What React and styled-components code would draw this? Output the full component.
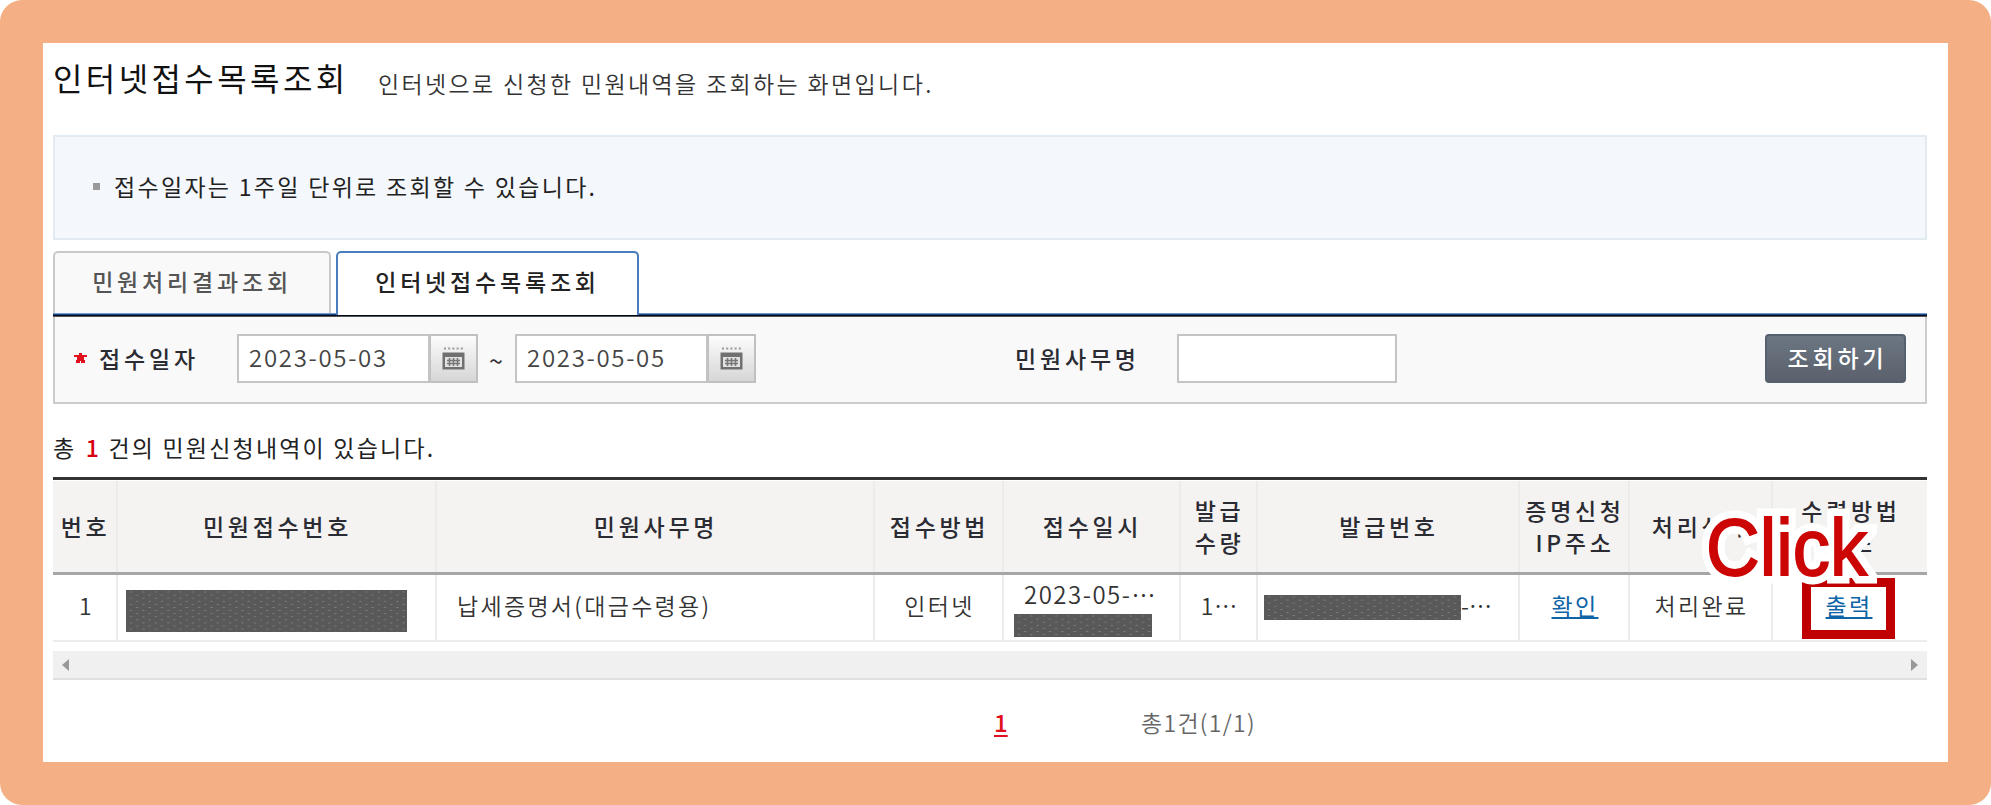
import React from "react"
import styled, { createGlobalStyle, css } from "styled-components"

const GlobalStyle = createGlobalStyle`
  * {
    box-sizing: border-box;
  }

  body {
    margin: 0;
    background: #fff;
    font-family: "Noto Sans CJK KR", sans-serif;
    font-size: 23px;
    color: #333;
  }
`

const Frame = styled.div`
  width: 1991px;
  height: 805px;
  padding: 43px;
  border-radius: 22px;
  background: #f4b084;
`

const Page = styled.main`
  height: 719px;
  padding: 0 21px 0 10px;
  background: #fff;
  white-space: nowrap;
`

const Header = styled.header`
  display: flex;
  height: 92px;
`

const Title = styled.h1`
  margin: 0;
  width: 325px;
  padding-top: 11px;
  font-size: 32px;
  font-weight: 400;
  line-height: 46px;
  letter-spacing: 3.4px;
  color: #111;
`

const Subtitle = styled.p`
  margin: 0;
  padding-top: 23px;
  line-height: 34px;
  letter-spacing: 2.35px;
  font-weight: 350;
  color: #333;
`

const Notice = styled.div`
  display: flex;
  align-items: center;
  gap: 14px;
  height: 105px;
  padding: 0 39px 3px 38px;
  border: 2px solid #e2eaf2;
  background: #f4f7fc;
  letter-spacing: 2.3px;
  color: #222;

  &::before {
    content: "";
    width: 7px;
    height: 7px;
    background: #999;
  }
`

const Tabs = styled.nav`
  display: flex;
  gap: 5px;
  height: 66px;
  margin-top: 11px;
  background: linear-gradient(#6f98cc 0 1px, #1f4580 1px 2px, #000a1f 2px 3px, #555 3px)
    bottom / 100% 4px no-repeat;
`

const Tab = styled.button`
  width: ${(p) => p.$width}px;
  height: 62px;
  padding: 0 0 5px;
  border: 2px solid #c9c9c9;
  border-bottom: 0;
  border-radius: 5px 5px 0 0;
  background: #f9f9f9;
  font: 500 23px/32px "Noto Sans CJK KR", sans-serif;
  letter-spacing: 3.8px;
  color: #555;

  ${(p) =>
    p.$active &&
    css`
      height: 64px;
      padding-bottom: 7px;
      border-color: #4a7dbd;
      background: #fff;
      color: #222;
    `}
`

const SearchPanel = styled.form`
  display: flex;
  height: 87px;
  padding: 17px 19px 0 19px;
  border: 2px solid #ccc;
  border-top: 0;
  background: #f9f9f9;
`

const Required = styled.svg`
  margin-top: 19px;
  width: 13px;
  height: 10px;
`

const Label = styled.label`
  width: ${(p) => p.$width}px;
  padding-left: ${(p) => p.$indent}px;
  font-weight: 500;
  line-height: 48px;
  letter-spacing: 3.8px;
  color: #2b2b33;
`

const Field = styled.input`
  width: ${(p) => p.$width}px;
  height: 49px;
  padding: 0 10px 4px;
  border: 2px solid #c4c4c4;
  background: #fff;
  font: 350 24px "Noto Sans CJK KR", sans-serif;
  letter-spacing: 1.7px;
  color: #444;
  outline: 0;
`

const CalendarButton = styled.button`
  display: grid;
  place-items: center;
  width: 48px;
  height: 49px;
  padding: 0;
  border: 2px solid #c0c0c0;
  border-left-width: 1px;
  background: linear-gradient(#fcfcfc, #d6d6d6);
`

const Tilde = styled.span`
  width: 37px;
  padding-right: 1px;
  text-align: center;
  font-size: 25px;
  line-height: 52px;
`

const SearchButton = styled.button`
  width: 141px;
  height: 49px;
  margin-left: auto;
  padding: 0 0 4px 4px;
  border: 2px solid #566170;
  border-radius: 4px;
  background: linear-gradient(#6b7682, #5b616c);
  font: 500 23px "Noto Sans CJK KR", sans-serif;
  letter-spacing: 3.9px;
  color: #fff;
`

const Count = styled.p`
  height: 73px;
  margin: 0;
  padding-top: 25px;
  line-height: 36px;
  letter-spacing: 2.2px;
  color: #222;

  strong {
    margin: 0 0 0 2px;
    font-weight: 500;
    color: #d9000d;
  }
`

const columns = css`
  display: grid;
  grid-template-columns: 65px 319px 438px 129px 177px 77px 262px 110px 143px 154px;
`

const Table = styled.section`
  border-top: 3px solid #333;
`

const HeadRow = styled.div`
  ${columns}
  height: 94px;
  margin-top: 1px;
  border-bottom: 3px solid #a6a6a6;
  background: #f4f3f1;
`

const HeadCell = styled.div`
  display: flex;
  align-items: center;
  justify-content: center;
  padding: 0 0 1px 2px;
  border-right: 2px solid #ebebea;
  font-weight: 500;
  line-height: 32px;
  letter-spacing: 3.7px;
  text-align: center;
  white-space: pre-line;
  color: #2b2b33;

  &:last-child {
    border-right: 0;
  }
`

const Row = styled.div`
  ${columns}
  height: 67px;
  border-bottom: 2px solid #ececec;
`

const Cell = styled.div`
  display: flex;
  flex-direction: ${(p) => (p.$stacked ? "column" : "row")};
  align-items: ${(p) => (p.$stacked ? "flex-start" : "center")};
  justify-content: ${(p) => (p.$left ? "flex-start" : "center")};
  padding-left: ${(p) => p.$indent ?? 2}px;
  border-right: 2px solid #ebebeb;
  line-height: 32px;
  letter-spacing: ${(p) => p.$spacing ?? 2.3}px;
  font-weight: 350;
  color: #333;

  &:last-child {
    border-right: 0;
  }
`

const CellText = styled.span`
  padding-bottom: 5px;
`

const DateText = styled.span`
  padding-left: 10px;
  height: 35px;
  font-size: 24px;
  line-height: 29px;
  letter-spacing: 1.5px;
`

const Mask = styled.span`
  width: ${(p) => p.$width}px;
  height: ${(p) => p.$height}px;
  margin-top: ${(p) => p.$top || 0}px;
  background-color: #595959;
  background-image: radial-gradient(#858585 0.7px, transparent 1.2px),
    radial-gradient(#858585 0.7px, transparent 1.2px);
  background-size: 12.4px 6.2px;
  background-position: -1.2px -1.1px, 5px 2px;
`

const TextLink = styled.a`
  padding-bottom: 5px;
  font-weight: 400;
  color: #0d64a6;
  text-decoration: underline;
  text-decoration-thickness: 2px;
  text-underline-offset: 2px;
`

const PrintTarget = styled.div`
  position: relative;
  display: grid;
  place-items: center;
  width: 93px;
  height: 61px;
  margin: 1px 6px 0 0;
  padding: 0 0 2px 2px;
  border: 9px solid #c00000;
  background: #fff;
`

const CalloutLayer = styled.div`
  position: absolute;
  left: 0;
  top: 0;
  z-index: 1;
`

const Callout = styled.span`
  position: absolute;
  left: -105px;
  bottom: 0;
  font: 80px/78px "Liberation Sans", sans-serif;
  letter-spacing: 0;
  color: #cc0505;
  -webkit-text-stroke: 1.8px #cc0505;
  transform: scaleX(0.93);
  transform-origin: left;

  &::before {
    content: "Click";
    position: absolute;
    left: 0;
    top: 0;
    z-index: -1;
    color: #fff;
    -webkit-text-stroke: 17px #fff;
    stroke-linejoin: round;
  }
`

const ScrollBar = styled.div`
  display: flex;
  align-items: center;
  justify-content: space-between;
  height: 29px;
  margin-top: 9px;
  padding: 0 9px;
  border-bottom: 2px solid #e0e0e0;
  background: #f0f0f0;
`

const Paging = styled.footer`
  display: flex;
  padding: 24px 0 0 941px;
  line-height: 36px;
`

const CurrentPage = styled.a`
  width: 147px;
  font-size: 24px;
  font-weight: 500;
  color: #e0101c;
  text-decoration: underline;
  text-decoration-thickness: 2px;
  text-underline-offset: 3px;
`

const Total = styled.span`
  font-weight: 350;
  letter-spacing: 1.3px;
  color: #666;
`

const headings = [
  "번호",
  "민원접수번호",
  "민원사무명",
  "접수방법",
  "접수일시",
  "발급\n수량",
  "발급번호",
  "증명신청\nIP주소",
  "처리상태",
  "수령방법\n취소",
]

const CalendarIcon = () => (
  <svg width="23" height="23" viewBox="0 0 23 23">
    <path d="M2 1.5h19" stroke="#999" strokeWidth="2" strokeDasharray="2 2.2" />
    <path d="M0.5 5.5h22v17h-22z" fill="#707070" />
    <path d="M3 10h17v10H3z" fill="#e2e2e2" />
    <path d="M5 13.5h13M5 16.5h13M7.5 11v8M11.5 11v8M15.5 11v8" stroke="#777" strokeWidth="1.6" />
  </svg>
)

const Arrow = ({ right }) => (
  <svg width="7" height="12" viewBox="0 0 7 12">
    <path d={right ? "M0 0l7 6-7 6z" : "M7 0L0 6l7 6z"} fill="#999" />
  </svg>
)

const App = () => (
  <>
    <GlobalStyle />
    <Frame>
      <Page>
        <Header>
          <Title>인터넷접수목록조회</Title>
          <Subtitle>인터넷으로 신청한 민원내역을 조회하는 화면입니다.</Subtitle>
        </Header>

        <Notice>접수일자는 1주일 단위로 조회할 수 있습니다.</Notice>

        <Tabs>
          <Tab $width={278}>민원처리결과조회</Tab>
          <Tab $width={303} $active>
            인터넷접수목록조회
          </Tab>
        </Tabs>

        <SearchPanel>
          <Required viewBox="0 0 13 10">
            <path d="M5 0h3v2h5v2h-3v3h1v3H7V8H6v2H2V7h1V4H0V2h5z" fill="#e0101c" />
          </Required>
          <Label $width={150} $indent={12}>
            접수일자
          </Label>
          <Field $width={193} defaultValue="2023-05-03" />
          <CalendarButton type="button">
            <CalendarIcon />
          </CalendarButton>
          <Tilde>~</Tilde>
          <Field $width={193} defaultValue="2023-05-05" />
          <CalendarButton type="button">
            <CalendarIcon />
          </CalendarButton>
          <Label $width={421} $indent={259}>
            민원사무명
          </Label>
          <Field $width={220} />
          <SearchButton type="button">조회하기</SearchButton>
        </SearchPanel>

        <Count>
          총 <strong>1</strong> 건의 민원신청내역이 있습니다.
        </Count>

        <Table>
          <HeadRow>
            {headings.map((heading) => (
              <HeadCell key={heading}>{heading}</HeadCell>
            ))}
          </HeadRow>
          <Row>
            <Cell $indent={4}>
              <CellText>1</CellText>
            </Cell>
            <Cell $left $indent={8}>
              <Mask $width={281} $height={42} $top={6} />
            </Cell>
            <Cell $left $indent={20}>
              <CellText>납세증명서(대금수령용)</CellText>
            </Cell>
            <Cell>
              <CellText>인터넷</CellText>
            </Cell>
            <Cell $stacked $indent={10}>
              <DateText>2023-05-⋯</DateText>
              <Mask $width={138} $height={23} />
            </Cell>
            <Cell $spacing={1}>
              <CellText>1⋯</CellText>
            </Cell>
            <Cell $left $indent={6} $spacing={0}>
              <Mask $width={197} $height={25} />
              <CellText>-⋯</CellText>
            </Cell>
            <Cell>
              <TextLink>확인</TextLink>
            </Cell>
            <Cell>
              <CellText>처리완료</CellText>
            </Cell>
            <Cell>
              <PrintTarget>
                <TextLink>출력</TextLink>
                <CalloutLayer>
                  <Callout>Click</Callout>
                </CalloutLayer>
              </PrintTarget>
            </Cell>
          </Row>
        </Table>

        <ScrollBar>
          <Arrow />
          <Arrow right />
        </ScrollBar>

        <Paging>
          <CurrentPage>1</CurrentPage>
          <Total>총1건(1/1)</Total>
        </Paging>
      </Page>
    </Frame>
  </>
)

export default App
